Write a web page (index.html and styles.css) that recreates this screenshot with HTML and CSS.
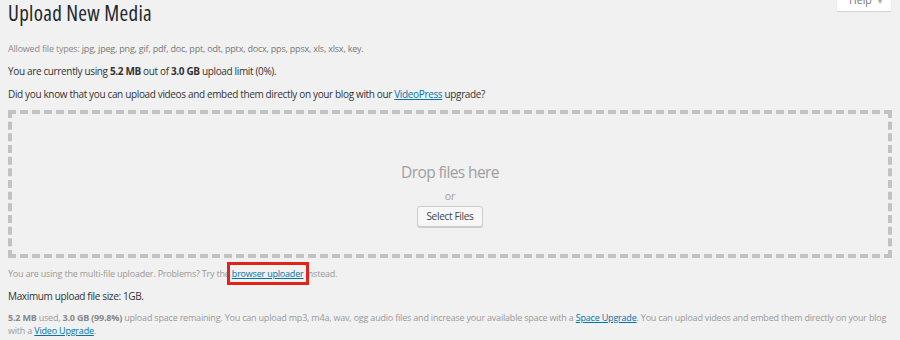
FILE: index.html
```html
<!DOCTYPE html>
<html lang="en">
<head>
  <meta charset="UTF-8" />
  <title>Upload New Media</title>
  <link rel="stylesheet" href="styles.css">
</head>
<body>
  <div class="wrap">
    <div class="help-tab">Help <span class="caret">&#9662;</span></div>
    <h1 class="page-title">Upload New Media</h1>

    <p class="desc">Allowed file types: <span class="types">jpg, jpeg, png, gif, pdf, doc, ppt, odt, pptx, docx, pps, ppsx, xls, xlsx, key.</span></p>
    <p class="line">You are currently using <strong>5.2 MB</strong> out of <strong>3.0 GB</strong> upload limit (0%).</p>
    <p class="line">Did you know that you can upload videos and embed them directly on your blog with our <a href="#">VideoPress</a> upgrade?</p>

    <div class="drop-area">
      <div class="drop-title">Drop files here</div>
      <div class="drop-or">or</div>
      <button class="select-btn">Select Files</button>
    </div>

    <p class="desc uploader-note">You are using the multi-file uploader. Problems? Try the <a href="#" class="highlight">browser uploader</a> instead.</p>
    <p class="line">Maximum upload file size: 1GB.</p>
    <p class="desc space-note"><strong>5.2 MB</strong> used, <strong>3.0 GB (99.8%)</strong> upload space remaining. You can upload mp3, m4a, wav, ogg audio files and increase your available space with a <a href="#">Space Upgrade</a>. You can upload videos and embed them directly on your blog with a <a href="#">Video Upgrade</a>.</p>
  </div>
</body>
</html>
```

FILE: styles.css
```css
* {
  box-sizing: border-box;
  margin: 0;
  padding: 0;
}

body {
  background: #f1f1f1;
  font-family: "Open Sans", sans-serif;
  color: #333;
  font-size: 10px;
  overflow: hidden;
}

.wrap {
  position: relative;
  padding: 0 8px;
}

.help-tab {
  position: absolute;
  top: -8px;
  right: 9px;
  width: 54px;
  height: 19px;
  background: #fff;
  box-shadow: 0 1px 1px rgba(0,0,0,0.1);
  color: #72777c;
  font-size: 10.5px;
  padding-left: 12px;
  line-height: 16px;
}

.help-tab .caret {
  font-size: 8px;
  color: #aaa;
  margin-left: 4px;
}

.page-title {
  font-size: 21px;
  font-weight: 400;
  font-stretch: condensed;
  letter-spacing: 0.3px;
  color: #23282d;
  line-height: 27px;
}

.desc {
  color: #8a8a8a;
  font-size: 9px;
  letter-spacing: -0.2px;
  margin-top: 15px;
}

.desc .types {
  color: #777;
}

.line {
  font-size: 10px;
  letter-spacing: -0.35px;
  line-height: 14px;
  margin-top: 9px;
}

a {
  color: #0073aa;
}

.drop-area {
  margin-top: 9px;
  height: 148px;
  border: 4px dashed #c2c2c2;
  display: flex;
  flex-direction: column;
  align-items: center;
  justify-content: center;
  padding-top: 19px;
}

.drop-title {
  font-size: 15.5px;
  letter-spacing: -0.6px;
  color: #a0a0a0;
}

.drop-or {
  font-size: 10.5px;
  color: #a0a0a0;
  margin-top: 6px;
}

.select-btn {
  margin-top: 3px;
  font-family: "Open Sans", sans-serif;
  font-size: 10px;
  letter-spacing: -0.3px;
  color: #444;
  background: #f7f7f7;
  border: 1px solid #ccc;
  border-radius: 3px;
  box-shadow: 0 1px 0 #ccc;
  padding: 0 8px;
  height: 21px;
}

.uploader-note {
  margin-top: 9px;
  color: #999;
}

.highlight {
  outline: 3px solid #e2231a;
  outline-offset: 2px;
}

.space-note {
  margin-top: 9px;
  line-height: 12.5px;
  color: #999;
}

.space-note strong {
  color: #888;
}
```
